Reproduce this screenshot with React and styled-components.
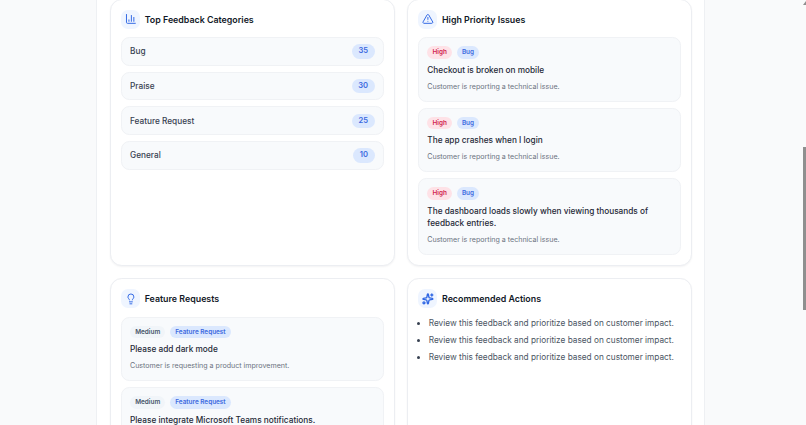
import React from "react"
import styled, { createGlobalStyle } from "styled-components"
import { ChartColumn, TriangleAlert, Lightbulb, Sparkles } from "lucide-react"

const GlobalStyle = createGlobalStyle`
  html, body {
    margin: 0;
    height: 100%;
    overflow: hidden;
    background: #f9fafb;
    font-family: Inter, "Liberation Sans", sans-serif;
  }
`

const Column = styled.main`
  box-sizing: border-box;
  width: 609px;
  height: 432px;
  margin: -1.4px 0 0 96px;
  padding: 0 13px;
  background: #fff;
  border-left: 1px solid #eef0f3;
  border-right: 1px solid #eef0f3;
  display: grid;
  grid-template-columns: 284.6px 284.6px;
  grid-template-rows: 267.4px 200px;
  gap: 12.2px 12.7px;
`

const Card = styled.section`
  box-sizing: border-box;
  padding: 10px;
  background: #fff;
  border: 1px solid #eceef2;
  border-radius: 11.8px;
  box-shadow: 0 1px 2px rgba(15, 23, 42, 0.05);
`

const Header = styled.header`
  display: flex;
  align-items: center;
  gap: 4.7px;
  height: 19px;
  margin-bottom: 8.4px;
`

const IconBox = styled.span`
  width: 19px;
  height: 19px;
  border-radius: 7px;
  background: #eff5ff;
  color: #3168e4;
  display: flex;
  align-items: center;
  justify-content: center;
`

const Title = styled.h2`
  margin: 0;
  font-size: 8.85px;
  font-weight: 600;
  color: #111827;
`

const Stack = styled.div`
  display: flex;
  flex-direction: column;
  gap: 5.9px;
`

const CategoryRow = styled.div`
  box-sizing: border-box;
  height: 28.8px;
  padding: 0 8px;
  background: #f8fafc;
  border: 1px solid #f0f2f5;
  border-radius: 8.3px;
  display: flex;
  align-items: center;
  justify-content: space-between;
  font-size: 8.26px;
  font-weight: 500;
  color: #374151;
`

const Count = styled.span`
  padding: 0 6.5px;
  height: 14.5px;
  line-height: 14.5px;
  border-radius: 99px;
  background: #dbe8fe;
  color: #3b6ae0;
  font-size: 7.6px;
  font-weight: 600;
`

const Item = styled.article`
  box-sizing: border-box;
  padding: 8.3px 8px;
  background: #f8fafc;
  border: 1px solid #f0f2f5;
  border-radius: 8.3px;
`

const Badges = styled.div`
  display: flex;
  gap: 4.7px;
  margin-bottom: 5.1px;
`

const palette = {
  high: ["#fee2e7", "#d1234f"],
  medium: ["#f1f5f9", "#475569"],
  type: ["#dbe8fe", "#3b6ae0"],
}

const Badge = styled.span`
  padding: 0 5.2px;
  height: 12.4px;
  line-height: 12.4px;
  border-radius: 99px;
  font-size: 6.4px;
  font-weight: 600;
  background: ${(p) => palette[p.$kind][0]};
  color: ${(p) => palette[p.$kind][1]};
`

const ItemTitle = styled.div`
  font-size: 8.26px;
  font-weight: 500;
  line-height: 12.6px;
  color: #1f2937;
`

const ItemText = styled.div`
  margin-top: 5.4px;
  font-size: 7.08px;
  line-height: 10.6px;
  color: #6b7280;
`

const Bullets = styled.ul`
  margin: -1.4px 0 0;
  padding: 0 0 0 10.5px;
  font-size: 8.26px;
  line-height: 16.8px;
  color: #4b5563;
  li::marker {
    color: #374151;
  }
`

const ScrollThumb = styled.div`
  position: fixed;
  right: 0;
  top: 147px;
  width: 3px;
  height: 163px;
  background: #8f8f8f;
`

const ScrollArrow = styled.div`
  position: fixed;
  right: 0;
  top: 1px;
  width: 0;
  height: 0;
  border-left: 3px solid transparent;
  border-bottom: 4px solid #8f8f8f;
`

const categories = [
  ["Bug", 35],
  ["Praise", 30],
  ["Feature Request", 25],
  ["General", 10],
]

const issues = [
  "Checkout is broken on mobile",
  "The app crashes when I login",
  "The dashboard loads slowly when viewing thousands of feedback entries.",
]

const requests = ["Please add dark mode", "Please integrate Microsoft Teams notifications."]

const FeedbackItem = ({ level, kind, type, title, text }) => (
  <Item>
    <Badges>
      <Badge $kind={kind}>{level}</Badge>
      <Badge $kind="type">{type}</Badge>
    </Badges>
    <ItemTitle>{title}</ItemTitle>
    <ItemText>{text}</ItemText>
  </Item>
)

const CardHeader = ({ icon: Icon, stroke = 2, children }) => (
  <Header>
    <IconBox>
      <Icon size={11.8} strokeWidth={stroke} />
    </IconBox>
    <Title>{children}</Title>
  </Header>
)

export default function App() {
  return (
    <>
      <GlobalStyle />
      <Column>
        <Card>
          <CardHeader icon={ChartColumn}>Top Feedback Categories</CardHeader>
          <Stack>
            {categories.map(([name, count]) => (
              <CategoryRow key={name}>
                {name}
                <Count>{count}</Count>
              </CategoryRow>
            ))}
          </Stack>
        </Card>
        <Card>
          <CardHeader icon={TriangleAlert}>High Priority Issues</CardHeader>
          <Stack>
            {issues.map((title) => (
              <FeedbackItem
                key={title}
                level="High"
                kind="high"
                type="Bug"
                title={title}
                text="Customer is reporting a technical issue."
              />
            ))}
          </Stack>
        </Card>
        <Card>
          <CardHeader icon={Lightbulb}>Feature Requests</CardHeader>
          <Stack>
            {requests.map((title) => (
              <FeedbackItem
                key={title}
                level="Medium"
                kind="medium"
                type="Feature Request"
                title={title}
                text="Customer is requesting a product improvement."
              />
            ))}
          </Stack>
        </Card>
        <Card>
          <CardHeader icon={Sparkles} stroke={2.8}>Recommended Actions</CardHeader>
          <Bullets>
            <li>Review this feedback and prioritize based on customer impact.</li>
            <li>Review this feedback and prioritize based on customer impact.</li>
            <li>Review this feedback and prioritize based on customer impact.</li>
          </Bullets>
        </Card>
      </Column>
      <ScrollArrow />
      <ScrollThumb />
    </>
  )
}
